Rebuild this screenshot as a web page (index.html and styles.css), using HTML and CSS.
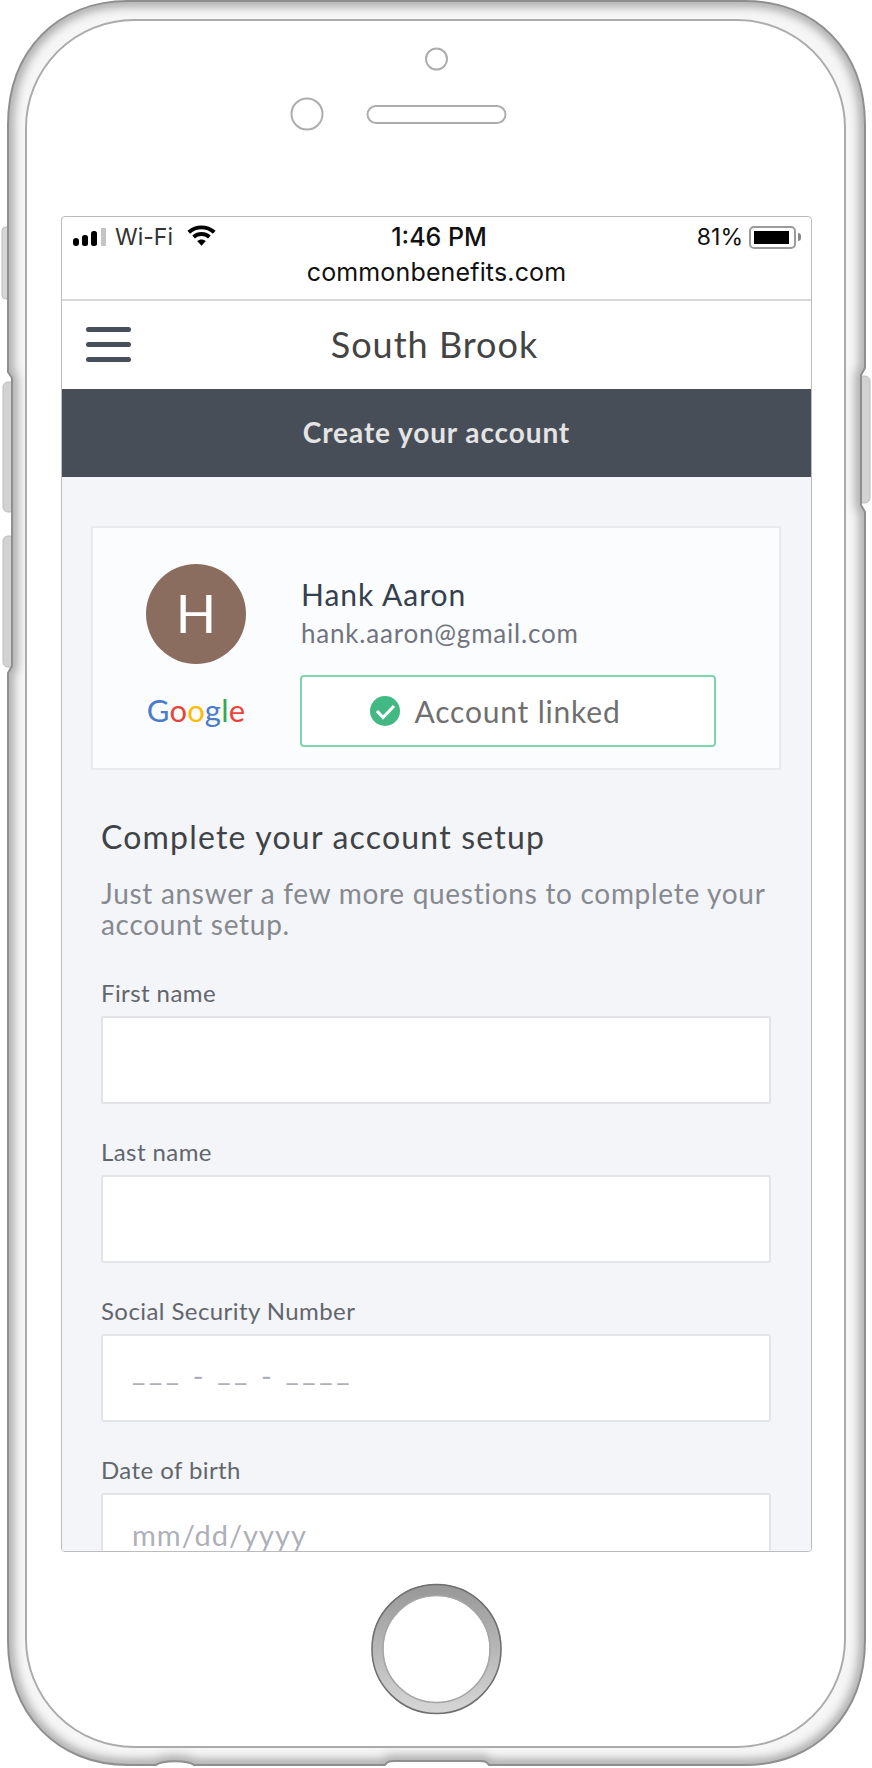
FILE: index.html
```html
<!DOCTYPE html>
<html lang="en">
<head>
<meta charset="UTF-8">
<meta name="viewport" content="width=device-width, initial-scale=1.0">
<title>Create your account</title>
<link rel="stylesheet" href="styles.css">
</head>
<body>

<div class="device">
    <!-- phone outline, drawn behind the screen -->
    <svg class="device-frame" width="872" height="1768" viewBox="0 0 872 1768">
        <defs>
            <filter id="soft" x="-5%" y="-5%" width="110%" height="110%"><feGaussianBlur stdDeviation="5"/></filter>
            <clipPath id="body-clip"><path d="M128 1H745C815 1 865 50 865 125V368L861 375V505L865 512V1640C865 1715 815 1765 745 1765H489C486 1761 484 1761 480 1761H394C390 1761 388 1761 385 1765H194C188 1760 162 1760 156 1765H128C58 1765 8 1715 8 1640V673L12 666V378L8 372V125C8 50 58 1 128 1Z"/></clipPath>
            <linearGradient id="ring" x1="0" y1="0" x2="0" y2="1"><stop offset="0" stop-color="#9a9a9a"/><stop offset="1" stop-color="#d4d4d4"/></linearGradient>
        </defs>
        <rect x="2" y="227" width="10" height="72" rx="4" fill="#d6d6d6" stroke="#bdbdbd"/>
        <rect x="3" y="382" width="14" height="130" rx="5" fill="#d2d2d2" stroke="#bdbdbd"/>
        <rect x="3" y="536" width="14" height="131" rx="5" fill="#d2d2d2" stroke="#bdbdbd"/>
        <rect x="856" y="376" width="14" height="127" rx="5" fill="#d2d2d2" stroke="#bdbdbd"/>
        <path d="M128 1H745C815 1 865 50 865 125V368L861 375V505L865 512V1640C865 1715 815 1765 745 1765H489C486 1761 484 1761 480 1761H394C390 1761 388 1761 385 1765H194C188 1760 162 1760 156 1765H128C58 1765 8 1715 8 1640V673L12 666V378L8 372V125C8 50 58 1 128 1Z" fill="#f6f6f6"/>
        <g clip-path="url(#body-clip)">
            <path d="M128 1H745C815 1 865 50 865 125V368L861 375V505L865 512V1640C865 1715 815 1765 745 1765H489C486 1761 484 1761 480 1761H394C390 1761 388 1761 385 1765H194C188 1760 162 1760 156 1765H128C58 1765 8 1715 8 1640V673L12 666V378L8 372V125C8 50 58 1 128 1Z" fill="none" stroke="#aaa" stroke-width="12" filter="url(#soft)"/>
        </g>
        <path d="M128 1H745C815 1 865 50 865 125V368L861 375V505L865 512V1640C865 1715 815 1765 745 1765H489C486 1761 484 1761 480 1761H394C390 1761 388 1761 385 1765H194C188 1760 162 1760 156 1765H128C58 1765 8 1715 8 1640V673L12 666V378L8 372V125C8 50 58 1 128 1Z" fill="none" stroke="#8f8f8f" stroke-width="2"/>
        <rect x="26" y="20" width="819" height="1727" rx="108" fill="#fff" stroke="#ababab" stroke-width="2"/>
        <circle cx="436.5" cy="59" r="10.5" fill="#fff" stroke="#adadad" stroke-width="2"/>
        <circle cx="307" cy="114" r="15.5" fill="#fff" stroke="#adadad" stroke-width="2"/>
        <rect x="367.5" y="106" width="138" height="17" rx="8.5" fill="#fff" stroke="#adadad" stroke-width="2"/>
        <circle cx="436.5" cy="1649" r="59" fill="#fff" stroke="url(#ring)" stroke-width="12"/>
        <circle cx="436.5" cy="1649" r="64.5" fill="none" stroke="#6f6f6f" stroke-width="1.5"/>
        <circle cx="436.5" cy="1649" r="53.5" fill="none" stroke="#a5a5a5" stroke-width="1.5"/>
    </svg>

    <div class="screen">
        <div class="status">
            <div class="status-row">
                <div class="status-left">
                    <svg class="signal" width="34" height="18" viewBox="0 0 34 18">
                        <rect x="0" y="10" width="6" height="8" rx="3"/>
                        <rect x="9" y="7" width="6" height="11" rx="2.5"/>
                        <rect x="18" y="3" width="6" height="15" rx="2.5"/>
                        <rect x="28" y="0" width="5" height="18" fill="#c4c4c4"/>
                    </svg>
                    <span>Wi-Fi</span>
                    <svg class="wifi" width="29" height="21" viewBox="0 0 28 20">
                        <path d="M14 20L9.8 15.3C12.1 13.3 15.9 13.3 18.2 15.3Z"/>
                        <path d="M7.6 12.9C11.2 9.7 16.8 9.7 20.4 12.9L22.9 10.1C17.9 5.6 10.1 5.6 5.1 10.1Z"/>
                        <path d="M3 8.2C9.3 2.6 18.7 2.6 25 8.2L27.6 5.4C19.9-1.5 8.1-1.5 .4 5.4Z"/>
                    </svg>
                </div>
                <div class="status-time">1:46 PM</div>
                <div class="status-right">
                    <span>81%</span>
                    <div class="battery"><div class="battery-level"></div></div>
                    <div class="battery-cap"></div>
                </div>
            </div>
            <div class="status-url">commonbenefits.com</div>
        </div>

        <div class="topbar">
            <div class="hamburger"><span></span><span></span><span></span></div>
            <div class="topbar-title">South Brook</div>
        </div>

        <div class="page-title">Create your account</div>

        <div class="content">
            <div class="account-card">
                <div class="account-side">
                    <div class="avatar">H</div>
                    <div class="google"><span class="g-blue">G</span><span class="g-red">o</span><span class="g-yellow">o</span><span class="g-blue">g</span><span class="g-green">l</span><span class="g-red">e</span></div>
                </div>
                <div class="account-main">
                    <div class="account-name">Hank Aaron</div>
                    <div class="account-email">hank.aaron@gmail.com</div>
                    <div class="account-linked">
                        <svg width="30" height="30" viewBox="0 0 30 30">
                            <circle cx="15" cy="15" r="15" fill="#42b883"/>
                            <path d="M7 15L13 21.5L24 10" fill="none" stroke="#fff" stroke-width="3.2"/>
                        </svg>
                        <span>Account linked</span>
                    </div>
                </div>
            </div>

            <h2 class="setup-title">Complete your account setup</h2>
            <p class="setup-text">Just answer a few more questions to complete your account setup.</p>

            <div class="field">
                <label>First name</label>
                <div class="input"></div>
            </div>
            <div class="field">
                <label>Last name</label>
                <div class="input"></div>
            </div>
            <div class="field">
                <label>Social Security Number</label>
                <div class="input placeholder ssn"><span class="blank">___</span> - <span class="blank">__</span> - <span class="blank">____</span></div>
            </div>
            <div class="field">
                <label>Date of birth</label>
                <div class="input placeholder">mm/dd/yyyy</div>
            </div>
        </div>
    </div>
</div>

</body>
</html>
```

FILE: styles.css
```css
body {
    margin: 0;
    background: #fff;
    font-family: "Lato", sans-serif;
}
.device {
    position: relative;
    box-sizing: border-box;
    width: 872px;
    height: 1768px;
    padding: 216px 0 0 61px;
    overflow: hidden;
}
.device-frame {
    position: absolute;
    top: 0;
    left: 0;
    z-index: -1;
}
.screen {
    box-sizing: border-box;
    width: 751px;
    height: 1336px;
    border: 1px solid #bcbcbc;
    border-radius: 4px;
    background: #fff;
    overflow: hidden;
}

/* status bar */
.status {
    height: 82px;
    border-bottom: 2px solid #d8d8d8;
    font-family: "Inter", sans-serif;
    color: #111;
    font-size: 25px;
}
.status-row {
    display: flex;
    justify-content: space-between;
    align-items: center;
    height: 40px;
    padding: 0 10px 0 11px;
}
.status-left, .status-right {
    display: flex;
    align-items: center;
    width: 232px;
}
.status-right {
    width: 228px;
    justify-content: flex-end;
}
.signal {
    margin-right: 8px;
}
.wifi {
    margin-left: 14px;
    margin-top: -4px;
}
.status-left span {
    font-size: 23px;
    color: #333;
}
.status-time {
    font-weight: 500;
}
.status-right span {
    font-size: 23px;
}
.battery {
    box-sizing: border-box;
    width: 47px;
    height: 23px;
    margin-left: 6px;
    padding: 3px;
    border: 2px solid #9b9b9b;
    border-radius: 5px;
}
.battery-level {
    width: 35px;
    height: 100%;
    background: #000;
}
.battery-cap {
    width: 3px;
    height: 8px;
    margin-left: 2px;
    background: #888;
    border-radius: 0 3px 3px 0;
}
.status-url {
    text-align: center;
    line-height: 30px;
    letter-spacing: 0.15px;
}

/* top bar */
.topbar {
    position: relative;
    box-sizing: border-box;
    height: 88px;
    padding-right: 4px;
    display: flex;
    align-items: center;
    justify-content: center;
    background: #fff;
}
.hamburger {
    position: absolute;
    left: 24px;
    top: 26px;
    width: 45px;
}
.hamburger span {
    display: block;
    height: 5px;
    margin-bottom: 10px;
    background: #47505a;
    border-radius: 3px;
}
.topbar-title {
    margin-top: -2px;
    font-size: 36px;
    letter-spacing: 1px;
    color: #444;
}

.page-title {
    height: 88px;
    line-height: 86px;
    text-align: center;
    background: #474e57;
    color: #e4e4e4;
    font-size: 28px;
    font-weight: 700;
    letter-spacing: 0.9px;
}

.content {
    padding: 49px 39px 0;
    background: #f3f5f9;
}

/* linked account */
.account-card {
    box-sizing: border-box;
    display: flex;
    width: 690px;
    height: 244px;
    margin-left: -10px;
    margin-bottom: 47px;
    padding-top: 36px;
    background: #fbfcfe;
    border: 2px solid #e9eaed;
}
.account-side {
    width: 206px;
    display: flex;
    flex-direction: column;
    align-items: center;
}
.avatar {
    width: 100px;
    height: 100px;
    line-height: 98px;
    border-radius: 50%;
    background: #8b6d60;
    color: #fff;
    font-size: 53px;
    text-align: center;
}
.google {
    margin-top: 28px;
    font-size: 31px;
    letter-spacing: 0.2px;
    line-height: 36px;
}
.g-blue { color: #4b7bcb; }
.g-red { color: #e9443a; }
.g-yellow { color: #fbbc05; }
.g-green { color: #34a853; }

.account-main {
    margin-left: 1px;
    padding-top: 12px;
}
.account-name {
    font-size: 30px;
    letter-spacing: 1px;
    color: #34404f;
    line-height: 36px;
    margin-left: 1px;
}
.account-email {
    font-size: 26px;
    letter-spacing: 0.8px;
    color: #71747f;
    line-height: 36px;
    margin: 3px 0 0 1px;
}
.account-linked {
    box-sizing: border-box;
    display: flex;
    align-items: center;
    justify-content: center;
    gap: 15px;
    width: 416px;
    height: 72px;
    margin-top: 24px;
    padding-right: 26px;
    background: #fff;
    border: 2px solid #7dd6ab;
    border-radius: 4px;
    font-size: 30px;
    letter-spacing: 0.8px;
    color: #6f6f6f;
}

/* form */
.setup-title {
    margin: 0 0 21px;
    font-size: 32px;
    font-weight: 400;
    letter-spacing: 1.2px;
    line-height: 40px;
    color: #3f4347;
}
.setup-text {
    margin: 0 0 37px;
    font-size: 28px;
    letter-spacing: 0.7px;
    line-height: 31px;
    color: #86898f;
}
.field {
    margin-bottom: 32px;
}
.field label {
    display: block;
    margin-bottom: 7px;
    font-size: 24px;
    letter-spacing: 0.42px;
    line-height: 32px;
    color: #62666c;
}
.input {
    box-sizing: border-box;
    height: 88px;
    width: 670px;
    padding-left: 29px;
    background: #fff;
    border: 2px solid #e3e4e8;
    border-radius: 3px;
}
.placeholder {
    line-height: 80px;
    font-size: 29px;
    letter-spacing: 1px;
    color: #aeb0b8;
}
.ssn {
    letter-spacing: 3.6px;
    word-spacing: -1px;
}
.blank {
    vertical-align: 6px;
    line-height: 1;
}
```
